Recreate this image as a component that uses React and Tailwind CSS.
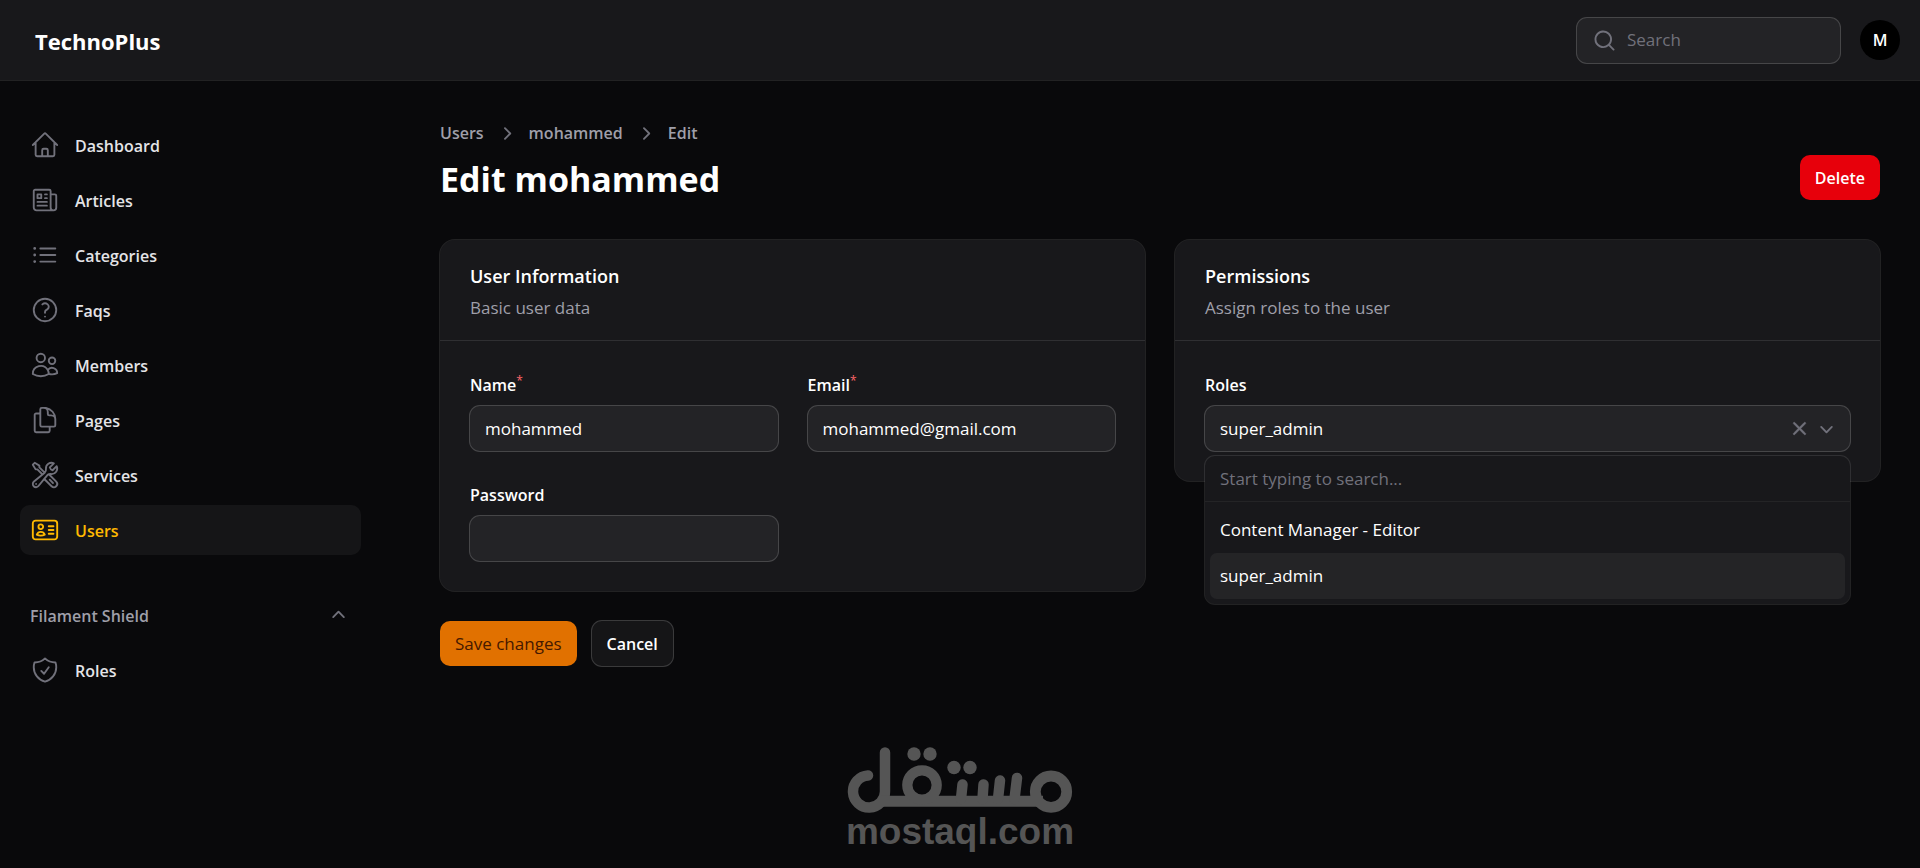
import { useState } from "react";
import {
  HiOutlineHome,
  HiOutlineNewspaper,
  HiOutlineListBullet,
  HiOutlineQuestionMarkCircle,
  HiOutlineUsers,
  HiOutlineDocumentDuplicate,
  HiOutlineWrenchScrewdriver,
  HiOutlineIdentification,
  HiOutlineShieldCheck,
  HiMiniMagnifyingGlass,
  HiMiniChevronRight,
  HiMiniChevronUp,
  HiMiniChevronDown,
  HiMiniXMark,
} from "react-icons/hi2";

const NAV = [
  { label: "Dashboard", icon: HiOutlineHome },
  { label: "Articles", icon: HiOutlineNewspaper },
  { label: "Categories", icon: HiOutlineListBullet },
  { label: "Faqs", icon: HiOutlineQuestionMarkCircle },
  { label: "Members", icon: HiOutlineUsers },
  { label: "Pages", icon: HiOutlineDocumentDuplicate },
  { label: "Services", icon: HiOutlineWrenchScrewdriver },
  { label: "Users", icon: HiOutlineIdentification, active: true },
];

const ROLES = ["Content Manager - Editor", "super_admin"];

function NavItem({ label, icon: Icon, active }) {
  return (
    <li>
      <a
        href="#"
        aria-current={active ? "page" : undefined}
        className={
          "flex h-[50px] items-center gap-[15px] rounded-[10px] px-[10px] font-semibold " +
          (active ? "bg-white/5 text-amber-400" : "text-zinc-200 hover:bg-white/5")
        }
      >
        <Icon className={"size-[30px] shrink-0 " + (active ? "text-amber-400" : "text-zinc-500")} />
        <span className="pt-[2px]">{label}</span>
      </a>
    </li>
  );
}

function Header() {
  return (
    <header className="flex h-[81px] items-center justify-between border-b border-white/10 bg-zinc-900 bg-clip-padding pr-5 pl-[35px]">
      <a href="#" className="pt-[2px] text-[22px] font-bold text-white">
        TechnoPlus
      </a>
      <div className="flex items-center gap-[19px]">
        <label className="flex h-[47px] w-[265px] items-center gap-[10px] rounded-[11px] border border-white/20 bg-white/5 bg-clip-padding px-[15px]">
          <HiMiniMagnifyingGlass className="size-[25px] shrink-0 text-zinc-500" />
          <input
            type="search"
            aria-label="Search"
            placeholder="Search"
            className="w-full min-w-0 bg-transparent text-[17px] text-white outline-none placeholder:text-zinc-500"
          />
        </label>
        <button
          type="button"
          aria-label="User menu"
          className="flex size-10 items-center justify-center rounded-full bg-black font-semibold text-white"
        >
          M
        </button>
      </div>
    </header>
  );
}

function Sidebar() {
  return (
    <nav className="flex w-[400px] shrink-0 flex-col gap-[35px] pt-[39px] pr-[39px] pl-5">
      <ul className="flex flex-col gap-[5px]">
        {NAV.map((item) => (
          <NavItem key={item.label} {...item} />
        ))}
      </ul>
      <div className="flex flex-col gap-[5px]">
        <button
          type="button"
          aria-expanded="true"
          className="flex h-[50px] items-center justify-between px-[10px] font-semibold text-zinc-400"
        >
          <span className="pt-[2px]">Filament Shield</span>
          <HiMiniChevronUp className="size-[25px] text-zinc-500" />
        </button>
        <ul>
          <NavItem label="Roles" icon={HiOutlineShieldCheck} />
        </ul>
      </div>
    </nav>
  );
}

function Section({ title, description, children }) {
  return (
    <section className="rounded-[16px] border border-white/10 bg-zinc-900 bg-clip-padding">
      <div className="flex h-[101px] flex-col gap-1 border-b border-white/10 px-[30px] pt-[22px]">
        <h2 className="text-lg leading-7 font-semibold text-white">{title}</h2>
        <p className="text-[17px] leading-7 text-zinc-400">{description}</p>
      </div>
      <div className="p-[29px]">{children}</div>
    </section>
  );
}

function Field({ id, label, required, children }) {
  return (
    <div className="flex flex-col gap-[5px]">
      <label htmlFor={id} className="pl-px leading-[30px] font-semibold text-white">
        {label}
        {required && <sup className="text-[12px] font-medium text-red-400">*</sup>}
      </label>
      {children}
    </div>
  );
}

function TextField({ id, label, type = "text", required, value = "" }) {
  return (
    <Field id={id} label={label} required={required}>
      <input
        id={id}
        type={type}
        required={required}
        defaultValue={value}
        className="h-[47px] w-full rounded-[11px] border border-white/20 bg-white/5 bg-clip-padding px-[15px] text-[17px] text-white outline-none"
      />
    </Field>
  );
}

function RolesField() {
  const [open, setOpen] = useState(true);
  const [role, setRole] = useState("super_admin");
  return (
    <Field id="roles" label="Roles">
      <div className="relative">
        <div className="flex h-[47px] items-center rounded-[11px] border border-white/20 bg-white/5 bg-clip-padding pr-[11px] pl-[15px]">
          <select
            id="roles"
            value={role}
            onMouseDown={(e) => {
              e.preventDefault();
              setOpen(!open);
            }}
            onChange={(e) => setRole(e.target.value)}
            className="h-full min-w-0 flex-1 appearance-none bg-transparent text-[17px] text-white outline-none"
          >
            <option value=""></option>
            {ROLES.map((r) => (
              <option key={r} value={r}>
                {r}
              </option>
            ))}
          </select>
          <button type="button" aria-label="Clear" onClick={() => setRole("")} className="text-zinc-500">
            <HiMiniXMark className="size-[25px]" strokeWidth={0.4} />
          </button>
          <HiMiniChevronDown className="ml-[2px] size-[25px] text-zinc-500" />
        </div>
        {open && (
          <div className="absolute inset-x-0 top-full z-10 mt-[3px] rounded-[11px] border border-white/10 bg-zinc-900 bg-clip-padding text-[17px]">
            <div className="border-b border-white/5">
              <input
                type="text"
                aria-label="Search roles"
                placeholder="Start typing to search..."
                className="h-[45px] w-full bg-transparent px-[15px] text-white outline-none placeholder:text-zinc-500"
              />
            </div>
            <ul role="listbox" aria-label="Roles" className="p-[5px]">
              {ROLES.map((r) => (
                <li
                  key={r}
                  role="option"
                  aria-selected={r === role}
                  onClick={() => {
                    setRole(r);
                    setOpen(false);
                  }}
                  className={
                    "flex h-[46px] items-center rounded-[7px] px-[10px] text-white " +
                    (r === role ? "bg-white/5" : "")
                  }
                >
                  {r}
                </li>
              ))}
            </ul>
          </div>
        )}
      </div>
    </Field>
  );
}

function Watermark() {
  return (
    <div className="pointer-events-none absolute inset-x-0 bottom-[17px] flex flex-col items-center text-[#555555]">
      <svg width="226" height="66" viewBox="0 0 226 66" fill="none" stroke="currentColor" aria-hidden="true">
        <path
          d="M21 28.500A16 16 0 1 0 38 44V5.500"
          strokeWidth="10.500"
          strokeLinecap="round"
        />
        <path d="M34 54.200H196" strokeWidth="11" />
        <circle cx="75" cy="38" r="14.700" strokeWidth="10.300" />
        <circle cx="204" cy="44.700" r="15.700" strokeWidth="10.800" />
        <path
          d="M115.500 37.500L114 52M136.500 37.500L135.500 52M153 33.500L151 52M170 31L167.500 52"
          strokeWidth="10.500"
          strokeLinecap="round"
        />
        <g fill="currentColor" stroke="none">
          <circle cx="67" cy="7" r="6.700" />
          <circle cx="83" cy="7" r="6.700" />
          <circle cx="107" cy="20.500" r="6.700" />
          <circle cx="123" cy="20.500" r="6.700" />
        </g>
      </svg>
      <span className="font-['Liberation_Sans',sans-serif] text-[37px] leading-[38px] font-bold">mostaql.com</span>
    </div>
  );
}

export default function App() {
  return (
    <div className="relative flex min-h-screen flex-col bg-zinc-950 font-['Open_Sans','Noto_Sans',sans-serif] text-base text-white">
      <Header />
      <div className="flex flex-1">
        <Sidebar />
        <main className="flex min-w-0 flex-1 flex-col px-[39px] pt-[37px]">
          <div className="flex items-center justify-between">
            <div className="flex flex-col gap-[9px] pl-px">
              <nav
                aria-label="Breadcrumb"
                className="flex items-center gap-[10px] leading-[30px] font-semibold text-zinc-400"
              >
                <a href="#">Users</a>
                <HiMiniChevronRight className="size-[25px] text-zinc-500" />
                <a href="#">mohammed</a>
                <HiMiniChevronRight className="size-[25px] text-zinc-500" />
                <a href="#">Edit</a>
              </nav>
              <h1 className="text-[34px] leading-[45px] font-bold text-white">Edit mohammed</h1>
            </div>
            <button
              type="button"
              className="mt-[35px] mr-px h-[45px] rounded-[10px] bg-red-600 px-[15px] font-semibold text-white"
            >
              Delete
            </button>
          </div>
          <form className="mt-[37px]" onSubmit={(e) => e.preventDefault()}>
            <div className="grid grid-cols-2 items-start gap-[28px]">
              <Section title="User Information" description="Basic user data">
                <div className="grid grid-cols-2 gap-[28px]">
                  <TextField id="name" label="Name" required value="mohammed" />
                  <TextField id="email" label="Email" type="email" required value="mohammed@gmail.com" />
                  <TextField id="password" label="Password" type="password" />
                </div>
              </Section>
              <Section title="Permissions" description="Assign roles to the user">
                <RolesField />
              </Section>
            </div>
            <div className="mt-[28px] flex items-center gap-[14px] pl-px">
              <button
                type="submit"
                className="h-[45px] rounded-[10px] bg-amber-600 px-[15px] text-[17px] font-medium text-amber-950"
              >
                Save changes
              </button>
              <button
                type="button"
                className="h-[47px] rounded-[11px] border border-white/20 bg-white/5 bg-clip-padding px-[15px] font-semibold text-white"
              >
                Cancel
              </button>
            </div>
          </form>
        </main>
      </div>
      <Watermark />
    </div>
  );
}
